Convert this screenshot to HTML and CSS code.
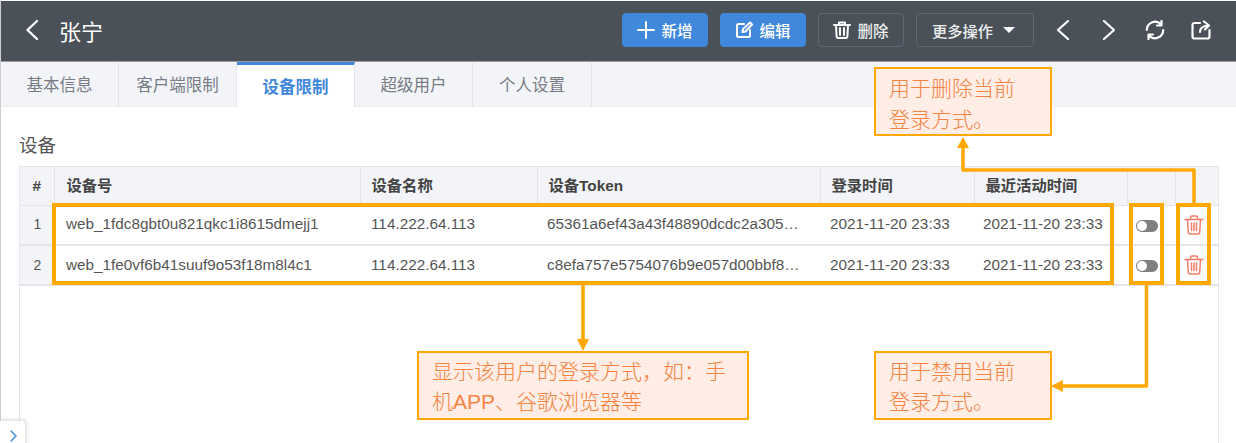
FILE: index.html
```html
<!DOCTYPE html>
<html lang="zh-CN">
<head>
<meta charset="utf-8">
<title>设备限制</title>
<link rel="stylesheet" href="styles.css">
</head>
<body>
<div class="page">
  <header class="topbar">
    <svg class="ic back" viewBox="0 0 16 24"><path d="M13 3 3.500 12l9.500 9"/></svg>
    <h1 class="title">张宁</h1>
    <div class="actions">
      <button class="btn primary"><svg class="ic s18" viewBox="0 0 18 18"><path d="M9 1v16M1 9h16"/></svg>新增</button>
      <button class="btn primary"><svg class="ic s18" viewBox="0 0 18 18"><path d="M9 3H3.500A1.500 1.500 0 0 0 2 4.500v10A1.500 1.500 0 0 0 3.500 16h10a1.500 1.500 0 0 0 1.500-1.500V9"/><path d="m7.500 11 .6-3L15 1.500 17 3.500 10.500 10.500z"/></svg>编辑</button>
      <button class="btn ghost"><svg class="ic s18" viewBox="0 0 18 18"><path d="M1 4h16M6 4V1.500h6V4M3 4l.6 11.500A1.500 1.500 0 0 0 5 17h8a1.500 1.500 0 0 0 1.400-1.500L15 4M7 7v7M11 7v7"/></svg>删除</button>
      <button class="btn ghost more">更多操作<span class="caret"></span></button>
      <nav class="navicons">
        <svg class="ic nav" viewBox="0 0 20 20"><path d="M15 1 5 10l10 9"/></svg>
        <svg class="ic nav" viewBox="0 0 20 20"><path d="m5 1 10 9-10 9"/></svg>
        <svg class="ic nav" viewBox="0 0 20 20"><path d="M1.800 10a8.200 8.200 0 0 1 14-5.800M16.500 1v4.500H12M18.200 10a8.200 8.200 0 0 1-14 5.800M3.500 19v-4.500H8"/></svg>
        <svg class="ic nav" viewBox="0 0 20 20"><path d="M9 3H3.500a2 2 0 0 0-2 2v11.500a2 2 0 0 0 2 2h13a2 2 0 0 0 2-2V10"/><path d="M9 12c0-3.500 2.500-6 8.500-6.500M13 1.500l5 4-4 4"/></svg>
      </nav>
    </div>
  </header>

  <div class="tabs">
    <div class="tab t1">基本信息</div>
    <div class="tab t2">客户端限制</div>
    <div class="tab t3 active">设备限制</div>
    <div class="tab t4">超级用户</div>
    <div class="tab t5">个人设置</div>
  </div>

  <main class="content">
    <h2 class="section">设备</h2>
    <div class="tablewrap">
      <table class="devices">
        <colgroup>
          <col class="c1"><col class="c2"><col class="c3"><col class="c4"><col class="c5"><col class="c6"><col class="c7"><col class="c8">
        </colgroup>
        <thead>
          <tr><th class="idx">#</th><th>设备号</th><th>设备名称</th><th>设备Token</th><th>登录时间</th><th>最近活动时间</th><th></th><th></th></tr>
        </thead>
        <tbody>
          <tr>
            <td class="idx">1</td><td>web_1fdc8gbt0u821qkc1i8615dmejj1</td><td>114.222.64.113</td><td>65361a6ef43a43f48890dcdc2a305…</td><td>2021-11-20 23:33</td><td>2021-11-20 23:33</td>
            <td class="tog"><span class="toggle"></span></td>
            <td class="del"><svg class="trash" viewBox="0 0 20 20"><path d="M1 4.500h18M6.500 4.500V2.500a1.500 1.500 0 0 1 1.500-1.500h4a1.500 1.500 0 0 1 1.500 1.500v2M3.500 4.500l.8 12.500a2 2 0 0 0 2 2h7.400a2 2 0 0 0 2-2l.8-12.500M7.500 8v7.500M10 8v7.500M12.500 8v7.500"/></svg></td>
          </tr>
          <tr>
            <td class="idx">2</td><td>web_1fe0vf6b41suuf9o53f18m8l4c1</td><td>114.222.64.113</td><td>c8efa757e5754076b9e057d00bbf8…</td><td>2021-11-20 23:33</td><td>2021-11-20 23:33</td>
            <td class="tog"><span class="toggle"></span></td>
            <td class="del"><svg class="trash" viewBox="0 0 20 20"><path d="M1 4.500h18M6.500 4.500V2.500a1.500 1.500 0 0 1 1.500-1.500h4a1.500 1.500 0 0 1 1.500 1.500v2M3.500 4.500l.8 12.500a2 2 0 0 0 2 2h7.400a2 2 0 0 0 2-2l.8-12.500M7.500 8v7.500M10 8v7.500M12.500 8v7.500"/></svg></td>
          </tr>
        </tbody>
      </table>
    </div>
  </main>

  <button class="sidehandle"><svg class="ic handle" viewBox="0 0 10 14"><path d="m2 2 5 5-5 5"/></svg></button>

  <div class="mark mark-main"></div>
  <div class="mark mark-toggle"></div>
  <div class="mark mark-del"></div>

  <svg class="wires" viewBox="0 0 1236 443">
    <path class="wire" d="M1194 204V170H963V147"/>
    <path class="head" d="M963 137l-6 11h12z"/>
    <path class="wire" d="M583 285V340"/>
    <path class="head" d="M583 351l-6-12h12z"/>
    <path class="wire" d="M1146.500 285V386H1062"/>
    <path class="head" d="M1051 386l12-6v12z"/>
  </svg>

  <div class="note note-del">用于删除当前<br>登录方式。</div>
  <div class="note note-main">显示该用户的登录方式&#xFF0C;如&#xFF1A;手<br>机APP、谷歌浏览器等</div>
  <div class="note note-ban">用于禁用当前<br>登录方式。</div>
</div>
</body>
</html>
```
FILE: styles.css
```css
* { box-sizing: border-box; }
html, body { margin: 0; height: 100%; background: #fff; overflow: hidden; }
body { font-family: "Liberation Sans", "Noto Sans CJK SC", sans-serif; color: #555; }
.page { position: relative; width: 1236px; height: 443px; display: flex; flex-direction: column; padding-top: 1px; border-left: 1px solid #cfcfcf; }
.ic { fill: none; stroke: #fff; stroke-width: 2; stroke-linecap: round; stroke-linejoin: round; }

.topbar { height: 61px; flex: none; background: #4a5158; display: flex; align-items: center; padding-bottom: 2px; border-bottom: 1px solid #9a9da0; }
.back { width: 16px; height: 24px; margin-left: 23px; stroke-width: 2.400; }
.title { margin: 0 0 0 19px; font-size: 22px; font-weight: 400; color: #fff; }
.actions { margin-left: auto; display: flex; align-items: center; gap: 12px; padding-right: 25px; }
.btn { height: 34px; width: 86px; padding: 0; display: flex; align-items: center; justify-content: center; gap: 6px; border-radius: 4px; font: 500 15.500px "Liberation Sans", "Noto Sans CJK SC", sans-serif; color: #fff; border: 1px solid #3f88dc; background: #3f88dc; }
.ghost { background: transparent; border-color: #5f6a74; color: #eceef0; }
.more { width: 118px; gap: 10px; font-size: 15.250px; padding-right: 3px; }
.s18 { width: 18px; height: 18px; }
.caret { width: 0; height: 0; border: 6px solid transparent; border-top: 6px solid #fff; border-bottom: 0; }
.navicons { display: flex; align-items: center; gap: 26px; margin-left: 7px; }
.nav { width: 20px; height: 20px; stroke-width: 2.200; }

.tabs { height: 45px; flex: none; display: flex; background: #f2f4f8; border-bottom: 1px solid #eceef2; }
.tab { height: 45px; padding-bottom: 2px; display: flex; align-items: center; justify-content: center; font-size: 16.500px; color: #777c85; border-right: 1px solid #e3e5ea; }
.t1 { width: 118px; }
.t2 { width: 118px; }
.t3 { width: 118px; }
.t4 { width: 118px; }
.t5 { width: 119px; }
.active { background: #fff; color: #3f88dc; font-weight: 700; border-top: 3px solid #3f88dc; margin-bottom: -1px; height: 46px; }

.content { flex: 1; min-height: 0; display: flex; flex-direction: column; padding: 26px 17px 0 18px; }
.section { margin: 0 0 7px; font-size: 18.500px; line-height: 26px; font-weight: 400; color: #555; }
.tablewrap { flex: 1; border: 1px solid #e3e5ea; border-bottom: 0; }
.devices { width: 100%; table-layout: fixed; border-collapse: collapse; font-size: 15.300px; }
.c1 { width: 34px; } .c2 { width: 306px; } .c3 { width: 177px; } .c4 { width: 283px; }
.c5 { width: 154px; } .c6 { width: 153px; } .c7 { width: 48px; } .c8 { width: 43px; }
.devices th { height: 38px; background: #f2f4f8; font-weight: 700; color: #444; text-align: left; padding: 0 11px 3px; border-right: 1px solid #e3e5ea; border-bottom: 1px solid #e3e5ea; }
.devices th:nth-child(2) { padding-left: 12px; }
.devices td { height: 40px; padding: 0 0 2px 10px; white-space: nowrap; overflow: hidden; color: #555; border-bottom: 2px solid #e3e5ea; }
.devices tr:last-child td { padding-bottom: 0; }
.devices td:nth-child(2) { padding-left: 12px; }
.devices td:nth-child(3) { padding-left: 11px; }
.devices td:nth-child(6) { padding-left: 9px; }
.devices .idx { text-align: center; background: #f2f4f8; padding: 0; }
.devices td.idx { font-size: 14px; padding: 0 0 2px 1px; }
.devices tr:last-child td.idx { padding-bottom: 0; }
.devices .tog { text-align: left; padding: 0 0 0 9px; }
.devices .del { text-align: left; padding: 0 0 0 9px; }
.toggle { display: inline-block; width: 22px; height: 12px; border-radius: 6px; background: #7f7f7f; position: relative; vertical-align: middle; }
.toggle::before { content: ""; position: absolute; left: 1px; top: 1px; width: 10px; height: 10px; border-radius: 50%; background: #fff; }
.trash { width: 20px; height: 20px; vertical-align: middle; fill: none; stroke: #f47c6a; stroke-width: 1.500; stroke-linecap: round; stroke-linejoin: round; }

.sidehandle { position: absolute; left: -1px; top: 421px; width: 25px; height: 30px; padding: 0; background: #fff; border: 0; border-radius: 0 3px 0 0; box-shadow: 1px -1px 4px rgba(0,0,0,.18); }
.handle { position: absolute; left: 9px; top: 8px; width: 10px; height: 14px; stroke: #4a90e2; stroke-width: 1.600; }

.mark { position: absolute; border: 4px solid #ffa800; }
.mark-main { left: 51px; top: 203px; width: 1062px; height: 82px; }
.mark-toggle { left: 1128px; top: 203px; width: 35px; height: 82px; }
.mark-del { left: 1175px; top: 203px; width: 35px; height: 82px; }

.wires { position: absolute; left: -1px; top: 0; width: 1236px; height: 443px; pointer-events: none; }
.wire { fill: none; stroke: #ffa800; stroke-width: 3.500; stroke-linejoin: round; }
.head { fill: #ffa800; }

.note { position: absolute; height: 69px; padding: 4px 0 0 13px; background: #ffede6; border: 2px solid #ffa800; color: #f58342; font-size: 21px; line-height: 30px; font-family: "Liberation Sans", "Noto Sans CJK SC", sans-serif; font-weight: 300; }
.note-del { left: 873px; top: 67px; width: 178px; line-height: 31px; }
.note-main { left: 416px; top: 351px; width: 332px; }
.note-ban { left: 873px; top: 351px; width: 178px; }
```
